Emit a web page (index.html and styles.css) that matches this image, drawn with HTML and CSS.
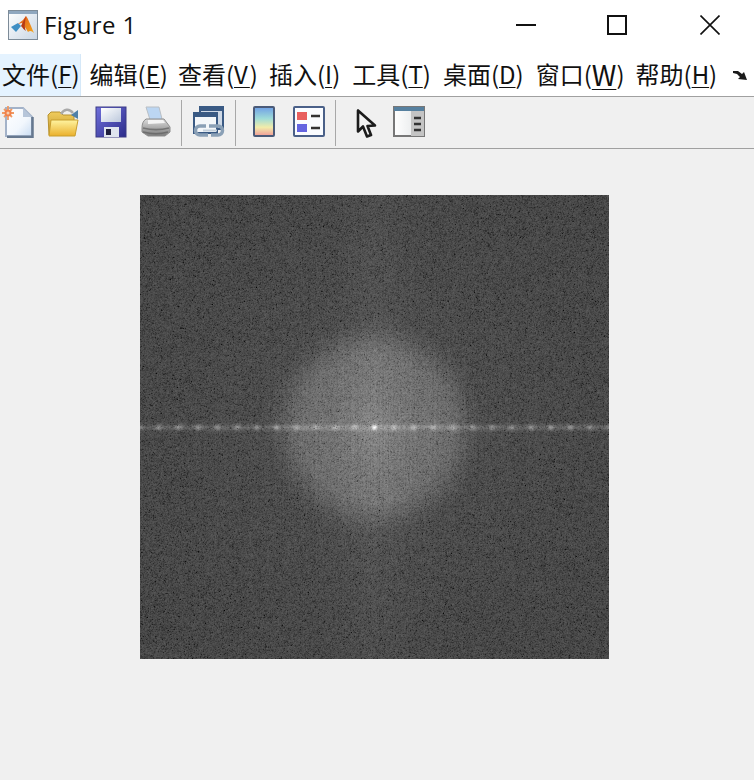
FILE: index.html
```html
<!DOCTYPE html>
<html lang="zh">
<head>
<meta charset="utf-8">
<title>Figure 1</title>
<link rel="stylesheet" href="styles.css">
<script src="script.js" defer></script>
</head>
<body>
<div class="window">
  <header class="titlebar">
    <svg class="app-icon" width="30" height="30" viewBox="0 0 30 30">
      <defs>
        <linearGradient id="appbg" x1="0" y1="0" x2="1" y2="1"><stop offset="0" stop-color="#ffffff"/><stop offset="1" stop-color="#c9d6e4"/></linearGradient>
        <linearGradient id="peak" x1="0" y1="0" x2="1" y2="1"><stop offset="0" stop-color="#e0521c"/><stop offset="1" stop-color="#f4a81c"/></linearGradient>
      </defs>
      <rect x="0.5" y="0.5" width="29" height="29" fill="url(#appbg)" stroke="#7d8b98"/>
      <rect x="1" y="1" width="28" height="3" fill="#8fa7bf"/>
      <path d="M3 17l7-4 3 3-5 6z" fill="#3f8fc4"/>
      <path d="M10 14l5-4 3-4c2 2 4 8 8 17-2-2-4-3-6-1-2-3-4-7-6-9z" fill="url(#peak)"/>
      <path d="M13 16l5-10c-1 6-2 11 0 15-2-1-3-3-5-5z" fill="#b63a16"/>
    </svg>
    <span class="title">Figure 1</span>
    <div class="controls">
      <svg class="ctl ctl-min" width="20" height="20" viewBox="0 0 20 20"><path d="M0 10h20" stroke="#111" stroke-width="2"/></svg>
      <svg class="ctl ctl-max" width="20" height="20" viewBox="0 0 20 20"><path d="M1 1h18v18H1z" fill="none" stroke="#111" stroke-width="2"/></svg>
      <svg class="ctl ctl-close" width="20" height="20" viewBox="0 0 20 20"><path d="M.5.5l19 19M19.5.5l-19 19" stroke="#111" stroke-width="1.6"/></svg>
    </div>
  </header>
  <nav class="menubar">
    <span class="menu menu-active">文件(<u>F</u>)</span>
    <span class="menu menu-edit">编辑(<u>E</u>)</span>
    <span class="menu menu-view">查看(<u>V</u>)</span>
    <span class="menu">插入(<u>I</u>)</span>
    <span class="menu">工具(<u>T</u>)</span>
    <span class="menu">桌面(<u>D</u>)</span>
    <span class="menu menu-win">窗口(<u>W</u>)</span>
    <span class="menu">帮助(<u>H</u>)</span>
    <svg class="more" width="16" height="12" viewBox="0 0 16 12"><path d="M0 2h5l4 3 2-2 3 8-9-1 2-2-3-3-4-1z" fill="#1a1a1a"/></svg>
  </nav>
  <div class="toolbar">
    <svg class="tool t-new" width="32" height="32" viewBox="0 0 32 32">
      <defs>
        <linearGradient id="paper" x1="0" y1="0" x2="1" y2="1"><stop offset="0" stop-color="#ffffff"/><stop offset=".6" stop-color="#f2f7fd"/><stop offset="1" stop-color="#c9dcf2"/></linearGradient>
      </defs>
      <path d="M4 2h17l9 9v19H4z" fill="url(#paper)" stroke="#a3b2c8" stroke-width="2"/>
      <path d="M21 2v9h9z" fill="#b7c6da"/>
      <path d="M30.500 11v20H5" fill="none" stroke="#66788f" stroke-width="2.500"/>
      <path d="M6 0v14M0 7h12M2 3l8 8M10 3l-8 8" stroke="#f09a64" stroke-width="1.800"/>
      <circle cx="6" cy="7" r="3.500" fill="#f0814a"/>
      <circle cx="6" cy="7" r="1.500" fill="#f8cfae"/>
    </svg>
    <svg class="tool t-open" width="32" height="32" viewBox="0 0 32 32">
      <defs>
        <linearGradient id="fold" x1="0" y1="0" x2="0" y2="1"><stop offset="0" stop-color="#fff4a0"/><stop offset="1" stop-color="#eab02c"/></linearGradient>
        <linearGradient id="foldb" x1="0" y1="0" x2="0" y2="1"><stop offset="0" stop-color="#f0cc5c"/><stop offset="1" stop-color="#c09630"/></linearGradient>
      </defs>
      <path d="M1 9l3-3h9l3 3h11v20H2z" fill="url(#foldb)" stroke="#b8922e"/>
      <path d="M4 14h27l-3 16H2z" fill="url(#fold)" stroke="#c89e2e"/>
      <path d="M14 8c3-5 8-6 12-1" fill="none" stroke="#a9a9a9" stroke-width="2.500"/>
      <path d="M24 9l7-5v9z" fill="#4f80a8"/>
    </svg>
    <svg class="tool t-save" width="32" height="32" viewBox="0 0 32 32">
      <defs>
        <linearGradient id="disk" x1="0" y1="0" x2="1" y2="1"><stop offset="0" stop-color="#7070dc"/><stop offset="1" stop-color="#2c2c8a"/></linearGradient>
        <linearGradient id="lab" x1="0" y1="0" x2="1" y2="1"><stop offset="0" stop-color="#fff"/><stop offset="1" stop-color="#bcc8dc"/></linearGradient>
      </defs>
      <rect x="1" y="1" width="30" height="30" fill="url(#disk)" stroke="#3a3a84"/>
      <rect x="6" y="2" width="20" height="14" fill="url(#lab)"/>
      <rect x="9" y="21" width="15" height="10" fill="#dfe4ee"/>
      <rect x="11" y="23" width="5" height="6" fill="#1e1e3c"/>
    </svg>
    <svg class="tool t-print" width="32" height="32" viewBox="0 0 32 32">
      <defs>
        <linearGradient id="prn" x1="0" y1="0" x2="0" y2="1"><stop offset="0" stop-color="#dcdcdc"/><stop offset="1" stop-color="#7c7c7c"/></linearGradient>
      </defs>
      <path d="M6 1h13l3 12 2 4H11z" fill="#bcd6f2" stroke="#b8bec4"/>
      <path d="M6 13c-3 2-4 5-4 9v4l6 4h17l5-4v-5l-6-8z" fill="url(#prn)" stroke="#8c8c8c"/>
      <path d="M3 22c8 2 18 2 26 0M3 26c8 2 18 2 25 0" fill="none" stroke="#5f5f5f" stroke-width="1.500" opacity=".7"/>
      <path d="M8 14h15l2 3-17 1z" fill="#f4f4f4"/>
    </svg>
    <span class="sep sep-a"></span>
    <svg class="tool t-link" width="33" height="32" viewBox="0 0 33 32">
      <rect x="7" y="1" width="23" height="22" fill="#cfd9e6" stroke="#3a5a84" stroke-width="2"/>
      <rect x="7" y="1" width="23" height="4" fill="#3a5a84"/>
      <rect x="1" y="7" width="23" height="20" fill="#f4f7fa" stroke="#3a5a84" stroke-width="2"/>
      <rect x="1" y="7" width="23" height="4" fill="#3a5a84"/>
      <path d="M13 20h-6a4.500 4.500 0 0 0 0 9h8" fill="none" stroke="#8aa0b6" stroke-width="3.500"/>
      <path d="M18 29h7a4.500 4.500 0 0 0 0-9h-9" fill="none" stroke="#8aa0b6" stroke-width="3.500"/>
      <path d="M10 24.500h14" stroke="#c4d0dc" stroke-width="2"/>
    </svg>
    <span class="sep sep-b"></span>
    <svg class="tool t-bar" width="22" height="31" viewBox="0 0 22 31">
      <defs>
        <linearGradient id="cbar" x1="0" y1="0" x2="0" y2="1"><stop offset="0" stop-color="#6f9fe6"/><stop offset=".4" stop-color="#9fdcd8"/><stop offset=".7" stop-color="#f2ecaa"/><stop offset="1" stop-color="#f09a98"/></linearGradient>
      </defs>
      <rect x="1" y="1" width="20" height="29" rx="1" fill="url(#cbar)" stroke="#4a5a78" stroke-width="2"/>
    </svg>
    <svg class="tool t-legend" width="32" height="31" viewBox="0 0 32 31">
      <rect x="1" y="1" width="30" height="29" rx="1" fill="#fafcff" stroke="#4a6088" stroke-width="2"/>
      <rect x="4" y="6" width="10" height="8" fill="#e85f5f"/>
      <rect x="4" y="18" width="10" height="8" fill="#6464e0"/>
      <path d="M18 10h9M18 22h9" stroke="#333" stroke-width="2.500"/>
    </svg>
    <span class="sep sep-c"></span>
    <svg class="tool t-cursor" width="21" height="30" viewBox="0 0 21 30">
      <path d="M2 1.500v21l5-5 4 10 4-1.500-3.500-9 7.500-.5z" fill="#f4f4f4" stroke="#1c1c1c" stroke-width="2.600" stroke-linejoin="round"/>
    </svg>
    <svg class="tool t-panel" width="32" height="31" viewBox="0 0 32 31">
      <defs>
        <linearGradient id="pan" x1="0" y1="0" x2="1" y2="0"><stop offset="0" stop-color="#fff"/><stop offset="1" stop-color="#dfe2e4"/></linearGradient>
      </defs>
      <rect x="1" y="1" width="30" height="29" fill="url(#pan)" stroke="#777" stroke-width="2"/>
      <rect x="1" y="1" width="30" height="4" fill="#56809f"/>
      <rect x="18" y="5" width="13" height="25" fill="#c4c4c4"/>
      <path d="M21 12h7M21 18h7M21 24h7" stroke="#333" stroke-width="2.400"/>
    </svg>
  </div>
  <main class="figure">
    <canvas id="spectrum" class="spectrum" width="469" height="464"></canvas>
  </main>
</div>
</body>
</html>
```
FILE: styles.css
```css
html, body {
  margin: 0;
  padding: 0;
  background: #f0f0f0;
}
.window {
  width: 754px;
  height: 780px;
  overflow: hidden;
  display: flex;
  flex-direction: column;
  font-family: "Noto Sans CJK SC", "Noto Sans", sans-serif;
  color: #111;
}
.titlebar {
  height: 54px;
  background: #fff;
  display: flex;
  align-items: center;
  box-sizing: border-box;
  padding: 0 0 4px 8px;
  flex: none;
}
.app-icon { flex: none; }
.title {
  font-family: "Open Sans", "Noto Sans", sans-serif;
  font-size: 24px;
  line-height: 30px;
  letter-spacing: .4px;
  margin-left: 6px;
}
.controls {
  margin-left: auto;
  display: flex;
}
.ctl { display: block; }
.ctl-min { margin-right: 71px; }
.ctl-max { margin-right: 73px; }
.ctl-close { margin-right: 34px; }
.menubar {
  height: 43px;
  background: #fff;
  border-bottom: 1px solid #a0a0a0;
  display: flex;
  align-items: stretch;
  box-sizing: border-box;
  flex: none;
  font-size: 24px;
}
.menu {
  display: flex;
  align-items: center;
  white-space: pre;
  padding: 0 3px 3px 2px;
  margin-right: 7px;
  height: 39px;
  line-height: 39px;
}
.menu u { text-underline-offset: 3px; text-decoration-thickness: 1px; }
.menu-active {
  background: #e5f3ff;
  border-right: 1px solid #d5e8f8;
  padding-right: 0;
  margin-right: 7px;
  height: 42px;
  box-sizing: border-box;
  padding-bottom: 3px;
}
.menu-edit { margin-right: 5px; }
.menu-view { margin-right: 6px; }
.menu-view u { letter-spacing: 2px; }
.menu-win { margin-right: 6px; }
.menu-win u { font-size: 28px; line-height: 24px; }
.more { align-self: center; margin-left: 6px; flex: none; }
.toolbar {
  height: 52px;
  border-bottom: 1px solid #a0a0a0;
  box-sizing: border-box;
  display: flex;
  align-items: flex-start;
  flex: none;
  background: #f0f0f0;
}
.tool {
  display: block;
  flex: none;
  margin-top: 9px;
  filter: blur(.5px);
}
.sep {
  display: block;
  flex: none;
  width: 1px;
  height: 46px;
  margin-top: 3px;
  background: #a8a8a8;
}
.t-new { margin-left: 2px; }
.t-open { margin-left: 13px; }
.t-save { margin-left: 16px; }
.t-print { margin-left: 13px; }
.sep-a { margin-left: 9px; }
.t-link { margin-left: 11px; }
.sep-b { margin-left: 9px; }
.t-bar { margin-left: 17px; }
.t-legend { margin-left: 18px; }
.sep-c { margin-left: 10px; }
.t-cursor { margin-left: 20px; margin-top: 12px; }
.t-panel { margin-left: 16px; }
.figure {
  flex: 1;
  background: #f0f0f0;
  padding: 46px 0 0 140px;
}
.spectrum {
  display: block;
  width: 469px;
  height: 464px;
}
```
FILE: script.js
```js
(function () {
  var canvas = document.getElementById('spectrum');
  var ctx = canvas.getContext('2d');
  var W = canvas.width, H = canvas.height;
  var img = ctx.createImageData(W, H);
  var cx = 234, cy = 232;
  var seed = 12345;
  function rnd() {
    seed = (seed * 1664525 + 1013904223) >>> 0;
    seed = (seed ^ (seed >>> 15)) >>> 0;
    return (seed % 1000000 + 0.5) / 1000000;
  }
  function smooth(a, b, x) {
    var t = Math.min(1, Math.max(0, (x - a) / (b - a)));
    return t * t * (3 - 2 * t);
  }
  var x, y;
  // log-Rayleigh speckle: its long tail runs to dark pits
  var raw = new Float32Array(W * H);
  for (y = 0; y < H; y++) {
    for (x = 0; x < W; x++) {
      raw[y * W + x] = Math.log(-Math.log(rnd())) * 0.5 + 0.29;
    }
  }
  var cols = new Float32Array(W), rows = new Float32Array(H);
  for (x = 0; x < W; x++) cols[x] = rnd() - 0.5;
  for (y = 0; y < H; y++) rows[y] = rnd() - 0.5;
  for (y = 0; y < H; y++) {
    for (x = 0; x < W; x++) {
      var dx = x - cx, dy = y - cy;
      var r = Math.sqrt(dx * dx + dy * dy);
      var base = 67 + 14 * Math.exp(-r / 170);
      // central disc, soft rim
      base += 30 * (1 - smooth(68, 112, r));
      base += 10 * Math.exp(-r / 40);
      // cross bands: the vertical one is broad and faint, so the disc stays round
      base += 7 * Math.exp(-(dx * dx) / 1600) * Math.exp(-Math.abs(dy) / 320);
      base += 2 * Math.exp(-Math.abs(dx) / 12);
      base += 2 * Math.exp(-Math.abs(dy) / 14);
      // bright horizontal line with periodic lobes
      var line = Math.exp(-(dy * dy) / 8);
      var phase = Math.cos(dx * 2 * Math.PI / 19.6);
      base += line * (24 + 42 * Math.pow((phase + 1) / 2, 4));
      // centre spot
      base += 45 * Math.exp(-r * r / 5);
      // faint line texture
      var ripple = Math.exp(-r / 110);
      base += cols[x] * 12 * ripple + rows[y] * 6 * ripple;
      // speckle
      var i0 = y * W + x;
      var nx = raw[x + 1 < W ? i0 + 1 : i0];
      var ny = raw[y + 1 < H ? i0 + W : i0];
      var n = raw[i0] * 0.8 + nx * 0.12 + ny * 0.12;
      var v = base + n * 18;
      if (v < 0) v = 0;
      if (v > 255) v = 255;
      var i = i0 * 4;
      img.data[i] = img.data[i + 1] = img.data[i + 2] = v;
      img.data[i + 3] = 255;
    }
  }
  ctx.putImageData(img, 0, 0);
})();
```
